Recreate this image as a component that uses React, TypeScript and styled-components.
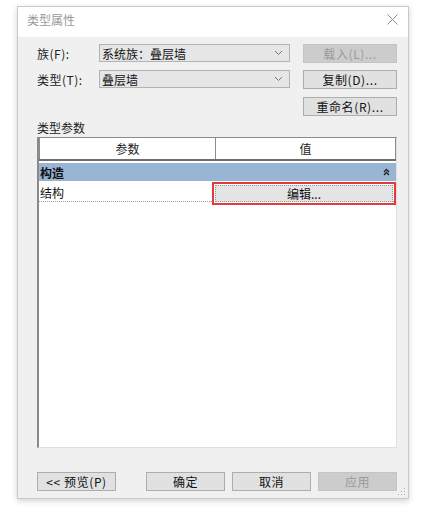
import React from "react";
import styled, { createGlobalStyle } from "styled-components";

const GlobalStyle = createGlobalStyle`
  html, body {
    margin: 0;
    padding: 0;
    background: #ffffff;
  }
  body {
    font-family: "Noto Sans CJK SC", "Liberation Sans", sans-serif;
    font-size: 12px;
    color: #1a1a1a;
  }
`;

const Desktop = styled.div`
  width: 431px;
  height: 511px;
  padding: 6px 0 0 17px;
  box-sizing: border-box;
`;

const Window = styled.div`
  width: 392px;
  height: 493px;
  background: #f0f0f0;
  border: 1px solid #c9c9c9;
  box-sizing: border-box;
  box-shadow: 0 2px 6px rgba(0, 0, 0, 0.18);
  display: flex;
  flex-direction: column;
  position: relative;
`;

const TitleBar = styled.div`
  height: 30px;
  box-sizing: border-box;
  background: #ffffff;
  display: flex;
  align-items: flex-start;
  justify-content: space-between;
  padding: 4px 10px 0 9px;
  color: #9a9a9a;
  font-size: 12px;
`;

const CloseIcon = styled.svg`
  margin-top: 3px;
`;

const Body = styled.div`
  flex: 1;
  display: flex;
  flex-direction: column;
  padding: 6px 11px 0 19px;
`;

const FormRow = styled.div<{ $top?: number }>`
  display: flex;
  align-items: center;
  height: 20px;
  margin-top: ${(p) => p.$top ?? 0}px;
`;

const Label = styled.div`
  width: 62px;
  font-size: 12px;
  color: #222;
  letter-spacing: 0.5px;
`;

const Select = styled.div`
  width: 191px;
  height: 18px;
  box-sizing: border-box;
  background: #e6e6e6;
  border: 1px solid #b3b3b3;
  display: flex;
  align-items: center;
  justify-content: space-between;
  padding: 0 6px 0 2px;
  font-size: 12px;
  color: #111;
`;

const Spacer = styled.div`
  flex: 1;
`;

const Button = styled.div<{ $disabled?: boolean; $w?: number }>`
  width: ${(p) => p.$w ?? 94}px;
  height: 19px;
  box-sizing: border-box;
  background: ${(p) => (p.$disabled ? "#cccccc" : "#e1e1e1")};
  border: 1px solid ${(p) => (p.$disabled ? "#c4c4c4" : "#adadad")};
  color: ${(p) => (p.$disabled ? "#9a9a9a" : "#111")};
  display: flex;
  align-items: center;
  justify-content: center;
  font-size: 12px;
  letter-spacing: 0.6px;
`;

const SectionLabel = styled.div`
  margin-top: 4px;
  font-size: 12px;
  height: 16px;
  line-height: 16px;
  color: #222;
`;

const Table = styled.div`
  margin-top: 1px;
  width: 360px;
  height: 311px;
  box-sizing: border-box;
  background: #ffffff;
  border-left: 2px solid #8a8a8a;
  border-top: 1px solid #8a8a8a;
  border-right: 1px solid #e0e0e0;
  border-bottom: 1px solid #e0e0e0;
  display: flex;
  flex-direction: column;
`;

const HeaderRow = styled.div`
  display: grid;
  grid-template-columns: 177px 1fr;
  height: 21px;
  border-bottom: 2px solid #6e6e6e;
`;

const HeaderCell = styled.div<{ $last?: boolean }>`
  display: flex;
  align-items: center;
  justify-content: center;
  border: 1px solid #8c8c8c;
  border-left: ${(p) => (p.$last ? "none" : "1px solid #8c8c8c")};
  border-top: none;
  border-bottom: none;
  font-size: 12px;
  color: #222;
`;

const GroupRow = styled.div`
  margin-top: 2px;
  height: 18px;
  background: #9ab4d3;
  display: flex;
  align-items: center;
  justify-content: space-between;
  padding: 0 6px 0 1px;
  font-weight: bold;
  font-size: 12px;
  color: #111;
`;

const ParamRow = styled.div`
  display: grid;
  grid-template-columns: 173px 1fr;
  height: 20px;
  border-bottom: 1px dotted #a0a0a0;
  align-items: center;
`;

const ParamName = styled.div`
  padding-left: 1px;
  font-size: 12px;
  color: #111;
`;

const Highlight = styled.div`
  border: 2px solid #e23b3b;
  height: 23px;
  box-sizing: border-box;
  padding: 1px;
  display: flex;
  position: relative;
  top: 1px;
`;

const EditButton = styled.div`
  flex: 1;
  background: #e4e4e4;
  border: 1px dotted #9a9a9a;
  display: flex;
  align-items: center;
  justify-content: center;
  font-size: 12px;
  color: #111;
`;

const Footer = styled.div`
  margin-top: 24px;
  display: flex;
  align-items: center;
  gap: 7px;
`;

const Grip = styled.svg`
  position: absolute;
  right: 2px;
  bottom: 2px;
`;

function DoubleUp() {
  return (
    <svg width="7" height="8" viewBox="0 0 7 8">
      <path d="M1 4 L3.5 1.5 L6 4" stroke="#222" strokeWidth="1.3" fill="none" />
      <path d="M1 7 L3.5 4.5 L6 7" stroke="#222" strokeWidth="1.3" fill="none" />
    </svg>
  );
}

function Chevron() {
  return (
    <svg width="9" height="6" viewBox="0 0 9 6">
      <path d="M1 1 L4.5 4.5 L8 1" stroke="#777" strokeWidth="1" fill="none" />
    </svg>
  );
}

export default function App() {
  return (
    <Desktop>
      <GlobalStyle />
      <Window>
        <TitleBar>
          <span>类型属性</span>
          <CloseIcon width="11" height="11" viewBox="0 0 11 11">
            <path d="M0.5 0.5 L10.5 10.5 M10.5 0.5 L0.5 10.5" stroke="#8a8a8a" strokeWidth="1" />
          </CloseIcon>
        </TitleBar>
        <Body>
          <FormRow>
            <Label>族(F):</Label>
            <Select>
              <span>系统族：叠层墙</span>
              <Chevron />
            </Select>
            <Spacer />
            <Button $disabled>载入(L)...</Button>
          </FormRow>
          <FormRow $top={6}>
            <Label>类型(T):</Label>
            <Select>
              <span>叠层墙</span>
              <Chevron />
            </Select>
            <Spacer />
            <Button>复制(D)...</Button>
          </FormRow>
          <FormRow $top={7}>
            <Spacer />
            <Button>重命名(R)...</Button>
          </FormRow>
          <SectionLabel>类型参数</SectionLabel>
          <Table>
            <HeaderRow>
              <HeaderCell>参数</HeaderCell>
              <HeaderCell $last>值</HeaderCell>
            </HeaderRow>
            <GroupRow>
              <span>构造</span>
              <DoubleUp />
            </GroupRow>
            <ParamRow>
              <ParamName>结构</ParamName>
              <Highlight>
                <EditButton>编辑...</EditButton>
              </Highlight>
            </ParamRow>
          </Table>
          <Footer>
            <Button $w={79}>&lt;&lt; 预览(P)</Button>
            <Spacer />
            <Button $w={79}>确定</Button>
            <Button $w={79}>取消</Button>
            <Button $w={79} $disabled>应用</Button>
          </Footer>
        </Body>
        <Grip width="8" height="8" viewBox="0 0 8 8">
          <rect x="6" y="0" width="1" height="1" fill="#b0b0b0" />
          <rect x="3" y="3" width="1" height="1" fill="#b0b0b0" />
          <rect x="6" y="3" width="1" height="1" fill="#b0b0b0" />
          <rect x="0" y="6" width="1" height="1" fill="#b0b0b0" />
          <rect x="3" y="6" width="1" height="1" fill="#b0b0b0" />
          <rect x="6" y="6" width="1" height="1" fill="#b0b0b0" />
        </Grip>
      </Window>
    </Desktop>
  );
}
